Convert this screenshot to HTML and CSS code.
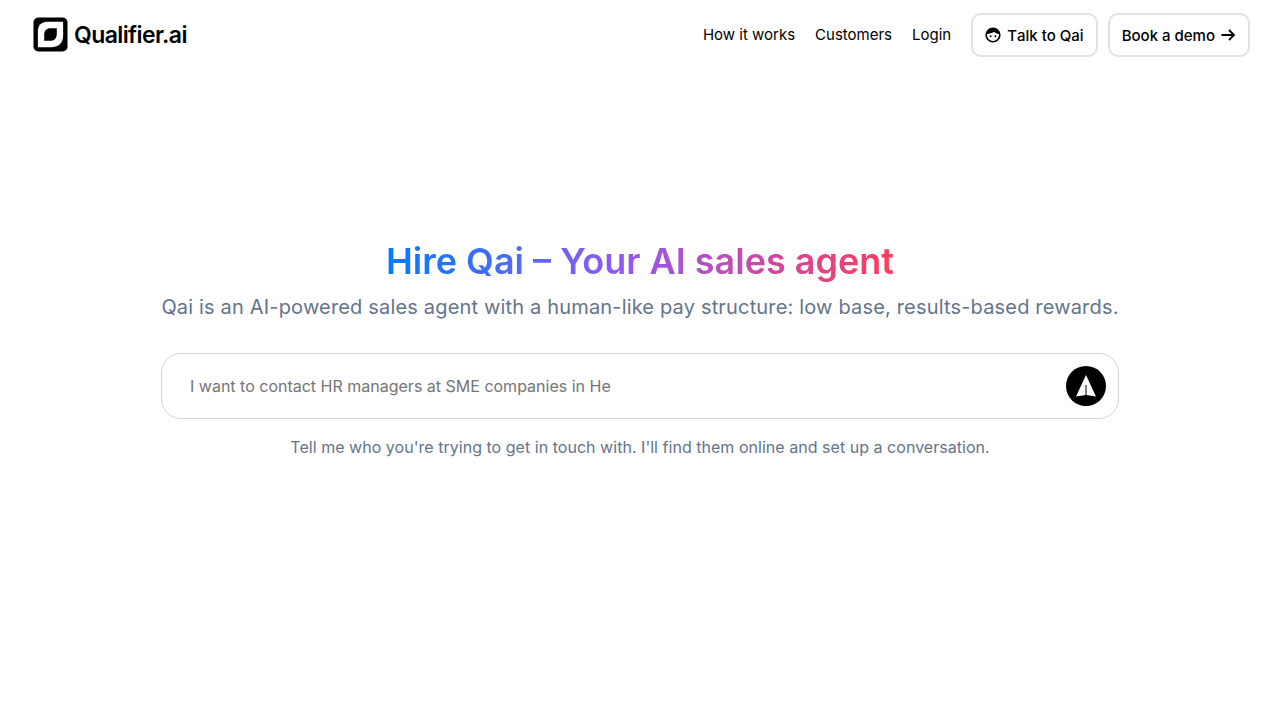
FILE: index.html
```html
<!DOCTYPE html>
<html lang="en">
<head>
<meta charset="utf-8">
<title>Qualifier.ai</title>
<link rel="stylesheet" href="styles.css">
</head>
<body>
<header class="nav">
  <a class="brand" href="#">
    <svg class="logo" viewBox="0 0 36 36" width="35" height="35">
      <rect x="0.500" y="0.500" width="35" height="35" rx="5" fill="#000"/>
      <path d="M15 5H31V19C31 26.500 26.500 31 19 31H5V15C5 8.500 8.500 5 15 5Z" fill="#fff"/>
      <path d="M18 11.500H24.500V17C24.500 21.800 22 24.500 18 24.500H11.500V18C11.500 14 14 11.500 18 11.500Z" fill="#000"/>
    </svg>
    <span class="brand-name">Qualifier.ai</span>
  </a>
  <nav class="links">
    <a href="#">How it works</a>
    <a href="#">Customers</a>
    <a href="#">Login</a>
    <a class="btn" href="#">
      <svg class="face" viewBox="0 0 16 16" width="16" height="16">
        <circle cx="8" cy="8" r="6.800" fill="#fff" stroke="#000" stroke-width="1.600"/>
        <path d="M1.500 7C1.800 3.300 4.500 1 8 1s6.200 2.300 6.500 6C12 6.800 10 6 9 4.800 8 6 4 6.900 1.500 7Z" fill="#000"/>
        <circle cx="5.600" cy="9.200" r="1" fill="#000"/>
        <circle cx="10.400" cy="9.200" r="1" fill="#000"/>
      </svg>
      Talk to Qai
    </a>
    <a class="btn" href="#">
      Book a demo
      <svg class="arrow" viewBox="0 0 16 16" width="16" height="16">
        <path d="M1.500 8H14M9 3l5 5-5 5" fill="none" stroke="#000" stroke-width="1.800"/>
      </svg>
    </a>
  </nav>
</header>
<main class="hero">
  <h1 class="title">Hire Qai – Your AI sales agent</h1>
  <p class="sub">Qai is an AI-powered sales agent with a human-like pay structure: low base, results-based rewards.</p>
  <div class="prompt">
    <span class="prompt-text">I want to contact HR managers at SME companies in He</span>
    <button class="send" type="button" aria-label="Send">
      <svg viewBox="0 0 40 40" width="40" height="40">
        <path d="M20 9L30 30.500L20.500 29V19H19.500V29L10 30.500Z" fill="#fff"/>
      </svg>
    </button>
  </div>
  <p class="hint">Tell me who you're trying to get in touch with. I'll find them online and set up a conversation.</p>
</main>
</body>
</html>
```
FILE: styles.css
```css
* { box-sizing: border-box; }
html, body { margin: 0; padding: 0; }
body {
  background: #fff;
  color: #000;
  font-family: Inter, "Liberation Sans", sans-serif;
  min-height: 720px;
}
a { color: inherit; text-decoration: none; }
.nav {
  display: flex;
  align-items: center;
  justify-content: space-between;
  padding: 13px 30px 0 33px;
  height: 57px;
}
.brand { display: flex; align-items: center; gap: 6px; margin-top: -1px; }
.logo { display: block; }
.brand-name { font-size: 23px; font-weight: 600; letter-spacing: -0.6px; line-height: 36px; }
.links { display: flex; align-items: center; gap: 20px; font-size: 15px; }
.links > a:not(.btn) { margin-top: -1px; }
.btn {
  display: flex;
  align-items: center;
  gap: 6px;
  height: 44px;
  padding: 0 12px;
  border: 2px solid #e2e2e2;
  border-radius: 10px;
  font-weight: 500;
  font-size: 15px;
  font-kerning: none;
}
.btn + .btn { margin-left: -10px; gap: 5px; }
.hero {
  display: flex;
  flex-direction: column;
  align-items: center;
  padding-top: 181px;
}
.title {
  margin: 0;
  font-size: 36px;
  line-height: 46px;
  font-weight: 600;
  background: linear-gradient(90deg, #007cff, #8f5af5 45%, #ff3b5c);
  -webkit-background-clip: text;
  background-clip: text;
  color: transparent;
}
.sub {
  margin: 8px 0 0;
  font-size: 20px;
  line-height: 30px;
  letter-spacing: 0.17px;
  color: #64748b;
}
.prompt {
  display: flex;
  align-items: center;
  justify-content: space-between;
  width: 958px;
  height: 66px;
  margin-top: 31px;
  padding: 0 12px 0 28px;
  border: 1px solid #d4d4d8;
  border-radius: 20px;
}
.prompt-text { font-size: 16px; color: #757575; }
.send {
  width: 40px;
  height: 40px;
  padding: 0;
  border: 0;
  border-radius: 50%;
  background: #000;
}
.send svg { display: block; }
.hint {
  margin: 16px 0 0;
  font-size: 16px;
  line-height: 24px;
  letter-spacing: 0.03px;
  color: #64748b;
}
```
